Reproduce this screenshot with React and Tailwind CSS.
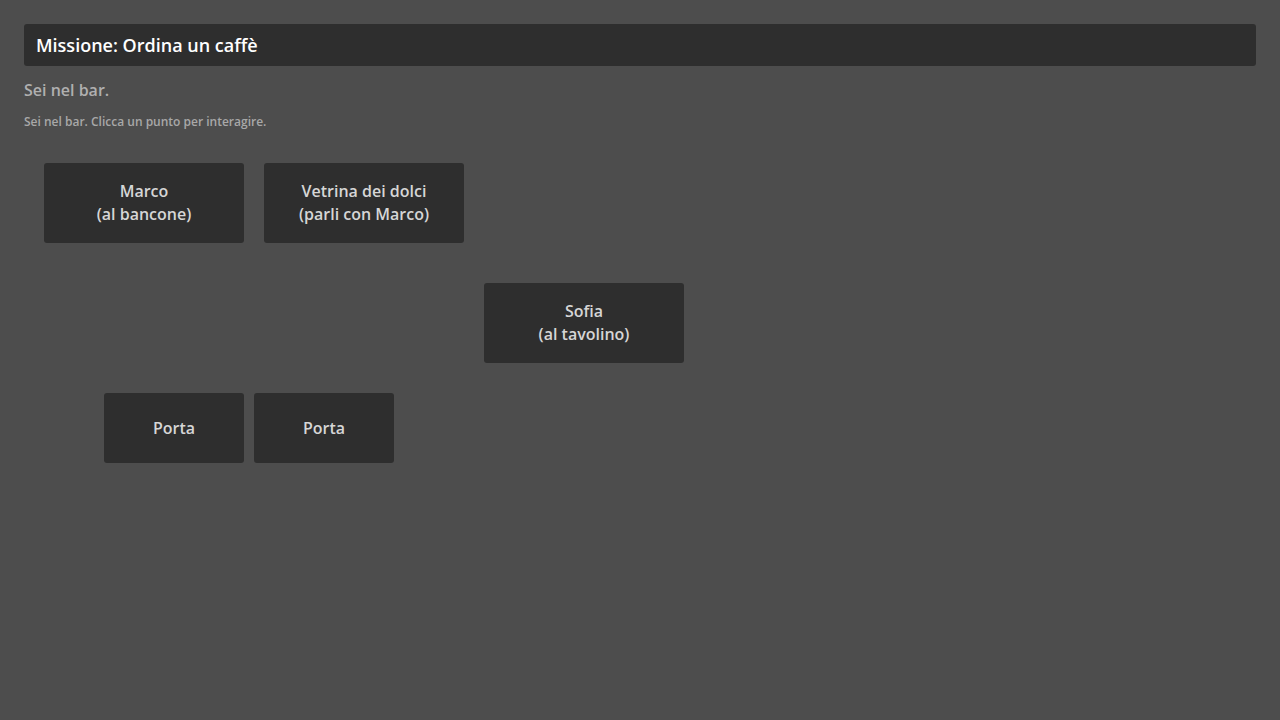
const spots = [
  { id: 'marco', lines: ['Marco', '(al bancone)'], pos: 'left-[20px] top-[20px] w-[200px] h-[80px]' },
  { id: 'vetrina', lines: ['Vetrina dei dolci', '(parli con Marco)'], pos: 'left-[240px] top-[20px] w-[200px] h-[80px]' },
  { id: 'sofia', lines: ['Sofia', '(al tavolino)'], pos: 'left-[460px] top-[140px] w-[200px] h-[80px]' },
  { id: 'porta1', lines: ['Porta'], pos: 'left-[80px] top-[250px] w-[140px] h-[70px]' },
  { id: 'porta2', lines: ['Porta'], pos: 'left-[230px] top-[250px] w-[140px] h-[70px]' },
];

export default function App() {
  return (
    <div
      className="min-h-screen w-full bg-[#4d4d4d] p-6"
      style={{ fontFamily: '"Open Sans", "Noto Sans", sans-serif' }}
    >
      <div className="h-[42px] bg-[#2e2e2e] rounded-[3px] px-3 flex items-center">
        <h1 className="text-[18px] font-semibold text-white">Missione: Ordina un caffè</h1>
      </div>
      <p className="mt-3 text-[16px] leading-6 font-semibold text-[#b0b0b0]">Sei nel bar.</p>
      <p className="mt-[11px] text-[12px] leading-[18px] font-semibold text-[#a8a8a8]">Sei nel bar. Clicca un punto per interagire.</p>

      <div className="relative mt-[12px] h-[340px]">
        {spots.map((s) => (
          <button
            key={s.id}
            className={`absolute ${s.pos} bg-[#2e2e2e] rounded-[3px] flex flex-col items-center justify-center text-[16px] leading-[23px] font-semibold text-[#d6d6d6]`}
          >
            {s.lines.map((l) => (
              <span key={l}>{l}</span>
            ))}
          </button>
        ))}
      </div>
    </div>
  );
}
